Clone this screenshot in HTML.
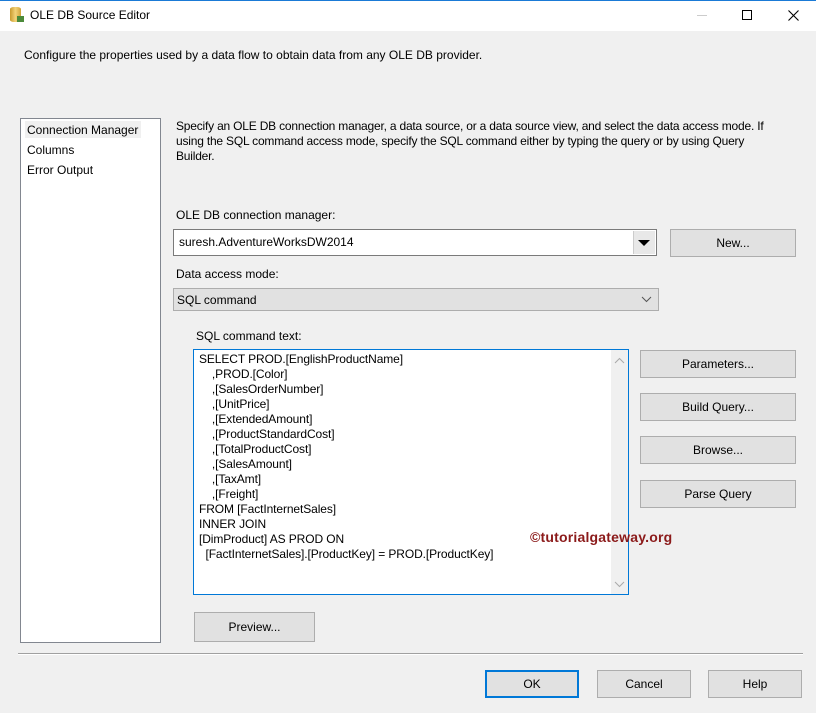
<!DOCTYPE html>
<html><head><style>
*{box-sizing:border-box;margin:0;padding:0}
body{width:816px;height:713px;background:#f0f0f0;font-family:"Liberation Sans",sans-serif;font-size:12px;color:#000;position:relative;overflow:hidden}
.a{position:absolute}
.btn{position:absolute;background:#e1e1e1;border:1px solid #adadad;text-align:center;font-size:12px}
.t{position:absolute;white-space:nowrap}
</style></head><body>
<div class="a" style="left:0;top:0;width:816px;height:31px;background:#fff;border-top:1px solid #1a7ad6"></div>
<div class="a" style="left:10px;top:7px;width:11px;height:15px;background:linear-gradient(90deg,#c99a2e,#f3d37a,#d1a33a);border-radius:4px/2px"></div>
<div class="a" style="left:17px;top:16px;width:7px;height:6px;background:#4b8a3a"></div>
<div class="t" style="left:30px;top:8px;font-size:12px">OLE DB Source Editor</div>
<div class="a" style="left:697px;top:15px;width:10px;height:1px;background:#ccc"></div>
<div class="a" style="left:742px;top:10px;width:10px;height:10px;border:1px solid #000"></div>
<svg class="a" style="left:788px;top:10px" width="11" height="11"><path d="M0.5 0.5L10.5 10.5M10.5 0.5L0.5 10.5" stroke="#000" stroke-width="1.1"/></svg>
<div class="t" style="left:24px;top:48px">Configure the properties used by a data flow to obtain data from any OLE DB provider.</div>

<div class="a" style="left:20px;top:118px;width:141px;height:525px;background:#fff;border:1px solid #828790"></div>
<div class="a" style="left:25px;top:121px;width:116px;height:17px;background:#f0f0f0"></div>
<div class="t" style="left:27px;top:123px">Connection Manager</div>
<div class="t" style="left:27px;top:143px">Columns</div>
<div class="t" style="left:27px;top:163px">Error Output</div>

<div class="t" style="left:176px;top:119px;line-height:15px;letter-spacing:-0.2px">Specify an OLE DB connection manager, a data source, or a data source view, and select the data access mode. If<br>using the SQL command access mode, specify the SQL command either by typing the query or by using Query<br>Builder.</div>
<div class="t" style="left:176px;top:208px">OLE DB connection manager:</div>
<div class="a" style="left:173px;top:229px;width:484px;height:27px;background:#fff;border:1px solid #7a7a7a"></div>
<div class="t" style="left:179px;top:235px">suresh.AdventureWorksDW2014</div>
<div class="a" style="left:633px;top:231px;width:22px;height:23px;background:#e8e8e8;border-left:1px solid #ccc"></div>
<div class="a" style="left:638px;top:240px;width:0;height:0;border-left:6px solid transparent;border-right:6px solid transparent;border-top:6px solid #000"></div>
<div class="btn" style="left:670px;top:229px;width:126px;height:28px;line-height:26px">New...</div>
<div class="t" style="left:176px;top:267px">Data access mode:</div>
<div class="a" style="left:173px;top:288px;width:486px;height:23px;background:#e1e1e1;border:1px solid #adadad"></div>
<div class="t" style="left:177px;top:293px">SQL command</div>
<svg class="a" style="left:641px;top:296px" width="11" height="7"><path d="M1 1L5.5 5.5L10 1" stroke="#555" fill="none"/></svg>
<div class="t" style="left:196px;top:329px">SQL command text:</div>
<div class="a" style="left:193px;top:349px;width:436px;height:246px;background:#fff;border:1px solid #0078d7"></div>
<div class="a" style="left:611px;top:350px;width:17px;height:244px;background:#f0f0f0"></div>
<svg class="a" style="left:614px;top:357px" width="11" height="7"><path d="M1 6L5.5 1.5L10 6" stroke="#aaa" fill="none"/></svg>
<svg class="a" style="left:614px;top:581px" width="11" height="7"><path d="M1 1L5.5 5.5L10 1" stroke="#aaa" fill="none"/></svg>
<div class="a" style="left:199px;top:352px;line-height:15px;white-space:pre;letter-spacing:-0.1px">SELECT PROD.[EnglishProductName]
    ,PROD.[Color]
    ,[SalesOrderNumber]
    ,[UnitPrice]
    ,[ExtendedAmount]
    ,[ProductStandardCost]
    ,[TotalProductCost]
    ,[SalesAmount]
    ,[TaxAmt]
    ,[Freight]
FROM [FactInternetSales]
INNER JOIN
[DimProduct] AS PROD ON
  [FactInternetSales].[ProductKey] = PROD.[ProductKey]</div>
<div class="t" style="left:530px;top:529px;font-size:14px;font-weight:bold;color:#8b1a1a;letter-spacing:0.2px">©tutorialgateway.org</div>
<div class="btn" style="left:640px;top:350px;width:156px;height:28px;line-height:26px">Parameters...</div>
<div class="btn" style="left:640px;top:393px;width:156px;height:28px;line-height:26px">Build Query...</div>
<div class="btn" style="left:640px;top:436px;width:156px;height:28px;line-height:26px">Browse...</div>
<div class="btn" style="left:640px;top:480px;width:156px;height:28px;line-height:26px">Parse Query</div>
<div class="btn" style="left:194px;top:612px;width:121px;height:30px;line-height:28px">Preview...</div>
<div class="a" style="left:18px;top:653px;width:785px;height:1px;background:#a0a0a0"></div>
<div class="a" style="left:18px;top:654px;width:785px;height:1px;background:#fff"></div>
<div class="btn" style="left:485px;top:670px;width:94px;height:28px;line-height:24px;border:2px solid #0078d7">OK</div>
<div class="btn" style="left:597px;top:670px;width:94px;height:28px;line-height:26px">Cancel</div>
<div class="btn" style="left:708px;top:670px;width:94px;height:28px;line-height:26px">Help</div>
</body></html>
